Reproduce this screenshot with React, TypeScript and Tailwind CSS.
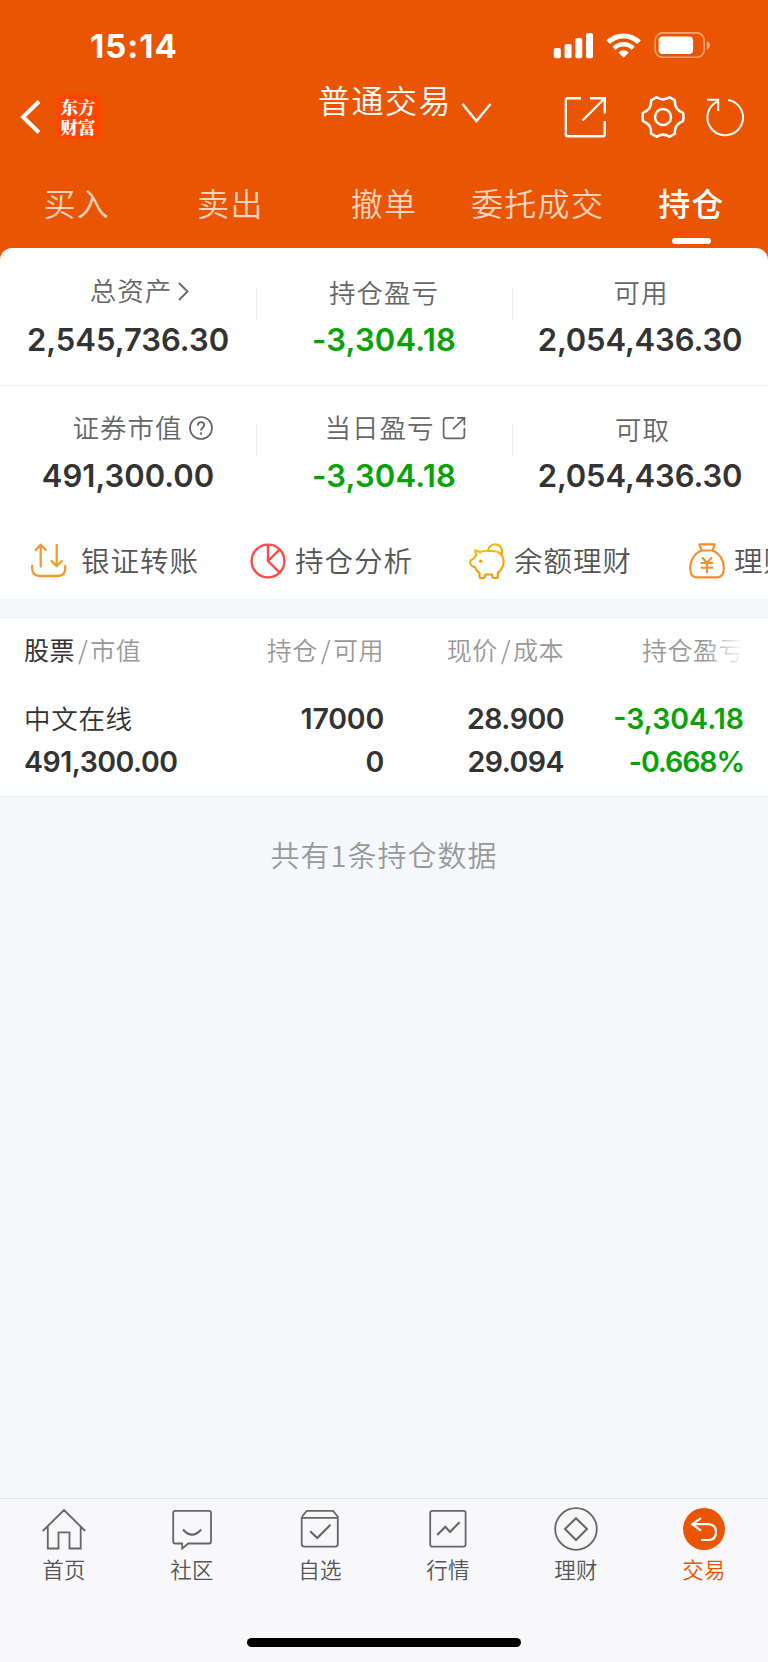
import { ReactNode } from "react";

const tabs = ["买入", "卖出", "撤单", "委托成交", "持仓"];

const ChevronIcon = () => (
  <svg className="mt-[2px]" width="11" height="19" viewBox="0 0 11 19" fill="none" stroke="#666" strokeWidth="1.8">
    <path d="M1 1L9.5 9.5L1 18" />
  </svg>
);
const HelpIcon = () => (
  <svg className="mt-px" width="24" height="24" viewBox="0 0 24 24" fill="none" stroke="#666" strokeWidth="1.7">
    <circle cx="12" cy="12" r="11" />
    <path d="M8.8 9.6C8.8 7.3 10.1 6.1 12 6.1S15.2 7.3 15.2 9.2C15.2 11.6 12 11.8 12 14.4" strokeWidth="1.9" />
    <path d="M12 16.4V18.6" strokeWidth="2.1" />
  </svg>
);
const OpenIcon = () => (
  <svg className="mt-px" width="24" height="24" viewBox="0 0 24 24" fill="none" stroke="#666" strokeWidth="1.7">
    <path d="M12 1.8H4.4Q1.6 1.8 1.6 4.6V19.6Q1.6 22.4 4.4 22.4H19.6Q22.4 22.4 22.4 19.6V12" />
    <path d="M15 1.8H22.4V9M22.2 2L11 13.2" />
  </svg>
);

type Cell = { label: string; value: string; icon?: ReactNode; green?: boolean; shift?: string };

const summary: Cell[][] = [
  [
    { label: "总资产", value: "2,545,736.30", icon: <ChevronIcon />, shift: "pl-[23px] gap-[6px]" },
    { label: "持仓盈亏", value: "-3,304.18", green: true },
    { label: "可用", value: "2,054,436.30", shift: "pl-[2px]" },
  ],
  [
    { label: "证券市值", value: "491,300.00", icon: <HelpIcon />, shift: "pl-[29px] gap-[6px]" },
    { label: "当日盈亏", value: "-3,304.18", icon: <OpenIcon />, green: true, shift: "pl-[22px] gap-[7px]" },
    { label: "可取", value: "2,054,436.30", shift: "pl-[5px]" },
  ],
];

const quickLinks = [
  {
    text: "银证转账",
    width: "w-[219px]",
    gap: "gap-[14px]",
    icon: (
      <svg width="36" height="36" viewBox="0 0 36 36" fill="none" stroke="#f19a2c" strokeWidth="2.3" strokeLinecap="round" strokeLinejoin="round">
        <path d="M9.7 23.5V2M4.7 7L9.7 1.8L14.8 7M25.7 2V23M20.6 18L25.7 23.3L30.8 18" />
        <path d="M1.2 23V25.5Q1.2 33 8.8 33H26.7Q34.2 33 34.2 25.5V23" />
      </svg>
    ),
  },
  {
    text: "持仓分析",
    width: "w-[219px]",
    gap: "gap-[9px]",
    icon: (
      <svg width="36" height="36" viewBox="0 0 36 36" fill="none" stroke="#fa4b4b" strokeWidth="2.4">
        <circle cx="18" cy="18" r="16.4" />
        <path d="M18 1.5V18L29.5 29.3M18 18L29.8 6.3" />
      </svg>
    ),
  },
  {
    text: "余额理财",
    width: "w-[220px]",
    gap: "gap-[9px]",
    icon: (
      <svg width="36" height="36" viewBox="0 0 36 36" fill="none" stroke="url(#pig)" strokeWidth="2.2" strokeLinejoin="round">
        <defs>
          <linearGradient id="pig" x1="0" y1="0" x2="0" y2="1">
            <stop offset="0" stopColor="#fbb90d" />
            <stop offset="1" stopColor="#f6960c" />
          </linearGradient>
        </defs>
        <path d="M6 7.3L11.3 9.3Q12.8 8 15 8H24C30.5 8 34.6 12.5 34.6 18.5C34.6 23.5 32 27.5 28.8 29.5V33.5Q28.8 35 27.3 35H25Q23.5 35 23.3 33.5L23 31.5H16.5L16 33.5Q15.7 35 14.2 35H12Q10.5 35 10.5 33.5V30Q8.5 28.8 7.4 26.8L6 24.3L3.4 23.3Q1.2 22.2 1.2 19.8Q1.2 16.8 4 16L5.4 14.8L7.4 12Z" />
        <path d="M19.2 7.8C19.6 4 22.3 1.3 26 1.3C30 1.3 33 4.2 33 8C33 9.7 32.5 11 31.8 12" />
        <circle cx="11.8" cy="18.3" r="1.8" fill="#f8a40c" stroke="none" />
      </svg>
    ),
  },
  {
    text: "理财",
    width: "w-[219px]",
    gap: "gap-[9px]",
    icon: (
      <svg width="36" height="36" viewBox="0 0 36 36" fill="none" stroke="#f58f2a" strokeWidth="2.1" strokeLinejoin="round" strokeLinecap="round">
        <path d="M10.3 1.4H25.7L23.5 7.5H12.6Z" />
        <path d="M12.6 7.5C6 10 1.2 16.5 1.2 25C1.2 31.5 3.6 34.4 8 34.4H28C32.4 34.4 34.8 31.5 34.8 25C34.8 16.5 30 10 23.5 7.5" />
        <path d="M13.5 14.8L18 20L22.5 14.8M18 20V29.3M12.5 20H23.5M12.5 24.7H23.5" />
      </svg>
    ),
  },
];

const bottomTabs = [
  {
    text: "首页",
    icon: (
      <path d="M0.8 23L22 2L43.2 23M5.8 18.5V40.5H16.5V24.3H27.5V40.5H38.7V18.5" />
    ),
  },
  {
    text: "社区",
    icon: (
      <>
        <path d="M5.2 2.8H39Q41 2.8 41 4.8V33.5Q41 35.5 39 35.5H18.2L12.2 40.6V35.5H5.2Q3.2 35.5 3.2 33.5V4.8Q3.2 2.8 5.2 2.8Z" />
        <path d="M13 21.5Q22 31.8 31.2 21.5" strokeWidth="2.1" />
      </>
    ),
  },
  {
    text: "自选",
    icon: (
      <>
        <path d="M4 8.8L8.8 2.8H35L39.8 8.8V36Q39.8 38.6 37.2 38.6H6.3Q3.7 38.6 3.7 36V9.8H39.8" />
        <path d="M12.2 23.2L19.3 30L32.5 16.8" strokeWidth="2.1" />
      </>
    ),
  },
  {
    text: "行情",
    icon: (
      <>
        <rect x="4.2" y="2.8" width="35.4" height="35.8" rx="2" />
        <path d="M11.2 27L19.3 18.8L24 24L33.5 14.2" strokeWidth="2.1" />
      </>
    ),
  },
  {
    text: "理财",
    icon: (
      <>
        <circle cx="22" cy="21" r="20.8" />
        <path d="M22 10.2L33 21L22 32L11 21Z" strokeWidth="2" />
      </>
    ),
  },
  {
    text: "交易",
    active: true,
    icon: (
      <>
        <circle cx="22" cy="21" r="21" fill="#ea5504" stroke="none" />
        <path d="M19 10.2L10.2 16.2L19 22.6M10.5 16.2H26.5Q34 16.8 34 24Q34 31.8 26.5 32H19" stroke="#fff" strokeWidth="2.2" />
      </>
    ),
  },
];

const Header = () => (
  <header className="h-[248px] text-white">
    <div className="h-[92px] flex items-center justify-between pl-[90px] pr-[58px]">
      <span className="font-['Inter',sans-serif] font-bold text-[33px] leading-[40px] tracking-[1px]">15:14</span>
      <svg width="157" height="28" viewBox="0 0 157 28" fill="#fff">
        <rect x="0.8" y="16" width="7" height="10.3" rx="2" />
        <rect x="11.6" y="12" width="7" height="14.3" rx="2" />
        <rect x="22.3" y="6" width="7" height="20.3" rx="2" />
        <rect x="33" y="1" width="7" height="25.3" rx="2" />
        <g fill="none" stroke="#fff" strokeWidth="5">
          <path d="M55.1 10.3A21.8 21.8 0 0 1 86 10.3" />
          <path d="M61 16.3A13.4 13.4 0 0 1 80.1 16.3" strokeWidth="4.6" />
        </g>
        <path d="M70.6 25.8L65.4 20.6Q70.6 16 75.8 20.6Z" />
        <rect x="102.2" y="0.9" width="49" height="24.4" rx="7.5" fill="none" stroke="#fff" strokeOpacity="0.45" strokeWidth="1.6" />
        <rect x="105.6" y="4.5" width="34.5" height="17.4" rx="4" />
        <path d="M153.8 9Q157 10.4 157 13.2T153.8 17.5Z" fillOpacity="0.5" />
      </svg>
    </div>
    <div className="h-[50px] flex items-center pl-[20px]">
      <svg width="21" height="34" viewBox="0 0 21 34" fill="none" stroke="#fff" strokeWidth="4">
        <path d="M19 1.5L3 17L19 32.5" />
      </svg>
      <p className="ml-[14px] w-[46px] h-[46px] pt-[3px] rounded-[9px] bg-[#ff4700] text-center font-['Noto_Serif_CJK_SC','Noto_Sans_CJK_SC',sans-serif] font-black text-[17.5px] leading-[19.5px]">
        东方
        <br />
        财富
      </p>
      <div className="ml-[217px] flex items-start">
        <span className="text-[32px] leading-[50px] -mt-[37px] tracking-[1.5px] font-[350]">普通交易</span>
        <svg className="ml-[9px] -mt-[8px]" width="32" height="20" viewBox="0 0 32 20" fill="none" stroke="#fff" strokeWidth="2.4">
          <path d="M1.5 1L15.5 18L29.5 1" />
        </svg>
      </div>
      <svg className="ml-[71px]" width="42" height="42" viewBox="0 0 42 42" fill="none" stroke="#fff" strokeWidth="2.4">
        <path d="M17 2.2H3.8Q1.8 2.2 1.8 4.2V38.2Q1.8 40.2 3.8 40.2H38.8Q40.8 40.2 40.8 38.2V25" />
        <path d="M26 2.2H40.8V17.5M40.5 2.5L18.5 24.5" />
      </svg>
      <svg className="ml-[35px]" width="44" height="44" viewBox="0 0 44 44" fill="none" stroke="#fff" strokeWidth="2.5" strokeLinejoin="round">
        <path d="M15.8 2.2Q22 6.6 28.2 2.2L34 5.4Q33 14.4 42 17.8Q42.9 22 42 26.2Q33 29.6 34 38.6L28.2 41.8Q22 37.4 15.8 41.8L10 38.6Q11 29.6 2 26.2Q1.1 22 2 17.8Q11 14.4 10 5.4Z" />
        <circle cx="22" cy="22" r="8" />
      </svg>
      <svg className="ml-[19px]" width="40" height="40" viewBox="0 0 40 40" fill="none" stroke="#fff" strokeWidth="2">
        <path d="M24.2 2.9A17.8 17.8 0 1 1 13.5 4.4" />
        <path d="M3 2.8H14.2V14" />
      </svg>
    </div>
    <nav className="grid grid-cols-5 h-[106px] pt-[38px]">
      {tabs.map((tab) => (
        <div key={tab} className="flex flex-col items-center">
          <span
            className={
              tab === "持仓"
                ? "text-[32px] leading-[44px] tracking-[1px] font-medium"
                : "text-[32px] leading-[44px] tracking-[1.3px] font-[350] text-[#fbd3bd]"
            }
          >
            {tab}
          </span>
          {tab === "持仓" && <div className="mt-[14px] w-[39px] h-[6px] rounded-[3px] bg-white" />}
        </div>
      ))}
    </nav>
  </header>
);

const Summary = () => (
  <section className="h-[351px] bg-white rounded-t-[12px]">
    {summary.map((row, i) => (
      <div
        key={i}
        className={i === 0 ? "grid grid-cols-3 h-[138px] border-b border-[#f0f0f0]" : "grid grid-cols-3 h-[137px]"}
      >
        {row.map((cell, j) => (
          <div key={cell.label} className="relative flex flex-col items-center">
            <div
              className={`flex items-center h-[36px] ${cell.icon ? "mt-[24px] mb-[12px]" : "mt-[26px] mb-[10px]"} ${i === 0 ? "" : "-translate-y-px"} ${cell.shift || ""}`}
            >
              <span className="text-[26.5px] leading-[36px] tracking-[1px] font-[350] text-[#666]">
                {cell.label}
              </span>
              {cell.icon}
            </div>
            <span
              className={`font-['Inter',sans-serif] font-semibold text-[31px] leading-[40px] ${i === 0 ? "" : "-mt-[2px]"} ${cell.green ? "text-[#06a206]" : "text-[#333]"} ${j === 2 ? "tracking-[-0.15px]" : ""} ${j === 1 ? "tracking-[0.2px]" : ""}`}
            >
              {cell.value}
            </span>
            {j < 2 && (
              <div
                className={`absolute -right-px w-px h-[34px] bg-[#ececec] ${i === 0 ? "top-[39px]" : "top-[37px]"}`}
              />
            )}
          </div>
        ))}
      </div>
    ))}
    <div className="h-[76px] pl-[31px] flex overflow-hidden">
      {quickLinks.map((link) => (
        <div key={link.text} className={`flex items-center shrink-0 h-[76px] ${link.width} ${link.gap}`}>
          {link.icon}
          <span className="text-[28.5px] leading-[40px] -mt-[2px] tracking-[1px] font-[350] text-[#555] whitespace-nowrap">
            {link.text}
          </span>
        </div>
      ))}
    </div>
  </section>
);

const Holdings = () => (
  <section className="h-[178px] bg-white px-[24px] border-b border-[#eceef2]">
    <div className="grid grid-cols-[180px_180px_180px_180px] h-[62px] items-center text-[25px] tracking-[0.5px] font-[350] text-[#999]">
      <div>
        <span className="text-[#333] font-normal">股票</span>
        <span className="pl-[3px] pr-[2px]">/</span>市值
      </div>
      <div className="text-right">
        持仓<span className="pl-[3px] pr-[2px]">/</span>可用
      </div>
      <div className="text-right">
        现价<span className="pl-[3px] pr-[2px]">/</span>成本
      </div>
      <div className="text-right relative">
        持仓盈亏
        <div className="absolute right-0 top-0 w-[40px] h-full bg-gradient-to-r from-white/0 to-white" />
      </div>
    </div>
    <div className="grid grid-cols-[180px_180px_180px_180px] pt-[16px] font-['Inter',sans-serif] font-semibold text-[28.5px] leading-[43px] text-[#333]">
      <div>
        <p className="font-['Noto_Sans_CJK_SC',sans-serif] text-[26.5px] tracking-[0.7px] font-[350] h-[43px] -mt-px mb-px">
          中文在线
        </p>
        <p className="tracking-[-0.5px]">491,300.00</p>
      </div>
      <div className="text-right tracking-[-0.2px]">
        <p>17000</p>
        <p>0</p>
      </div>
      <div className="text-right tracking-[-0.5px]">
        <p>28.900</p>
        <p>29.094</p>
      </div>
      <div className="text-right text-[#06a206]">
        <p>-3,304.18</p>
        <p className="tracking-[-1.1px]">-0.668%</p>
      </div>
    </div>
  </section>
);

const BottomNav = () => (
  <footer className="h-[164px] bg-[#f8f8fb] border-t border-[#e5e6e9] flex flex-col items-center">
    <div className="grid grid-cols-6 w-full pt-[9px]">
      {bottomTabs.map((tab) => (
        <div key={tab.text} className="flex flex-col items-center">
          <svg width="44" height="43" viewBox="0 0 44 43" fill="none" stroke="#666" strokeWidth="1.8" overflow="visible">
            {tab.icon}
          </svg>
          <span
            className={`text-[21.5px] leading-[30px] mt-[3px] tracking-[0.3px] font-[350] ${tab.active ? "text-[#ea5504]" : "text-[#555]"}`}
          >
            {tab.text}
          </span>
        </div>
      ))}
    </div>
    <div className="mt-[54px] w-[274px] h-[9px] rounded-full bg-black" />
  </footer>
);

const App = () => {
  return (
    <div className="w-[768px] h-[1662px] flex flex-col bg-[#ea5504] overflow-hidden font-['Noto_Sans_CJK_SC',sans-serif]">
      <Header />
      <Summary />
      <div className="h-[20px] bg-[#f4f8fa]" />
      <Holdings />
      <div className="flex-1 bg-[#f4f8fa] pt-[35px] text-center text-[29px] leading-[44px] tracking-[1px] font-[350] text-[#999]">
        共有1条持仓数据
      </div>
      <BottomNav />
    </div>
  );
};

export default App;
